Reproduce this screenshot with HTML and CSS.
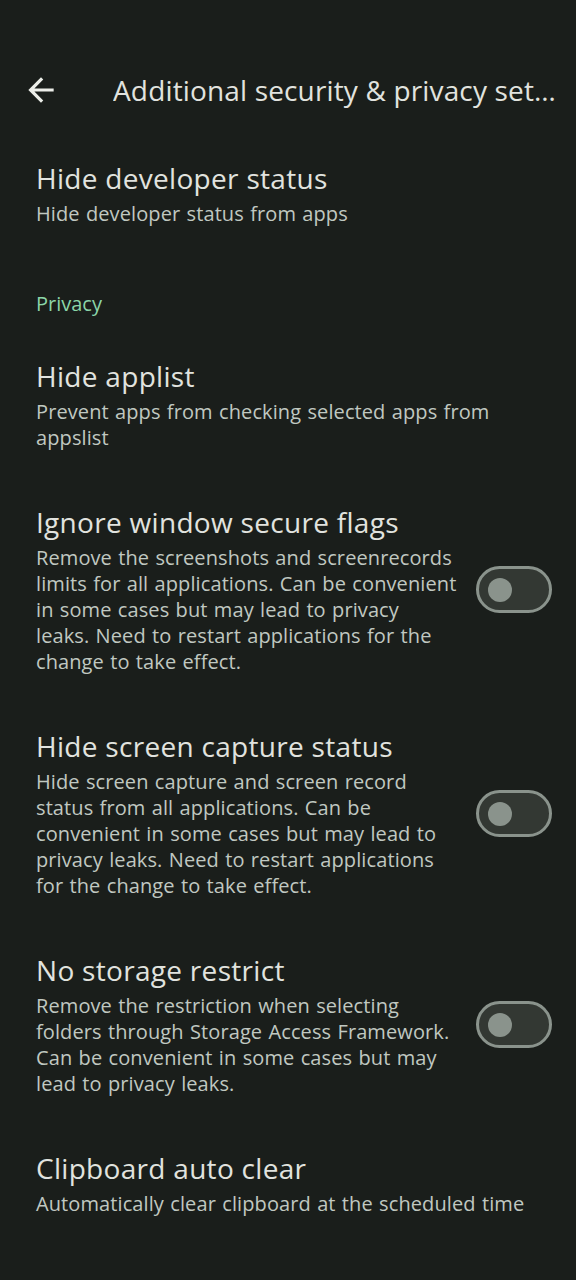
FILE: index.html
```html
<!DOCTYPE html>
<html lang="en">
<head>
  <meta name="viewport" content="width=device-width, initial-scale=1.0">
  <title>Additional security &amp; privacy settings</title>
  <link rel="stylesheet" href="styles.css">
</head>
<body>
  <div class="topbar">
    <button class="back" aria-label="Back">
      <svg viewBox="0 0 24 24" width="38" height="38">
        <path d="M20 11H7.83l5.59-5.59L12 4l-8 8 8 8 1.41-1.41L7.83 13H20v-2z" fill="currentColor"/>
      </svg>
    </button>
    <h1 class="topbar-title">Additional security &amp; privacy settings</h1>
  </div>

  <div class="item">
    <div class="item-text">
      <div class="item-title">Hide developer status</div>
      <div class="item-summary">Hide developer status from apps</div>
    </div>
  </div>

  <div class="category">Privacy</div>

  <div class="item">
    <div class="item-text">
      <div class="item-title">Hide applist</div>
      <div class="item-summary">Prevent apps from checking selected apps from appslist</div>
    </div>
  </div>

  <div class="item">
    <div class="item-text narrow">
      <div class="item-title">Ignore window secure flags</div>
      <div class="item-summary">Remove the screenshots and screenrecords limits for all applications. Can be convenient in some cases but may lead to privacy leaks. Need to restart applications for the change to take effect.</div>
    </div>
    <div class="switch"><div class="thumb"></div></div>
  </div>

  <div class="item">
    <div class="item-text narrow">
      <div class="item-title">Hide screen capture status</div>
      <div class="item-summary">Hide screen capture and screen record status from all applications. Can be convenient in some cases but may lead to privacy leaks. Need to restart applications for the change to take effect.</div>
    </div>
    <div class="switch"><div class="thumb"></div></div>
  </div>

  <div class="item">
    <div class="item-text narrow">
      <div class="item-title">No storage restrict</div>
      <div class="item-summary">Remove the restriction when selecting folders through Storage Access Framework. Can be convenient in some cases but may lead to privacy leaks.</div>
    </div>
    <div class="switch"><div class="thumb"></div></div>
  </div>

  <div class="item">
    <div class="item-text">
      <div class="item-title">Clipboard auto clear</div>
      <div class="item-summary">Automatically clear clipboard at the scheduled time</div>
    </div>
  </div>
</body>
</html>
```

FILE: styles.css
```css
* {
  box-sizing: border-box;
}

body {
  margin: 0;
  background-color: #1a1e1b;
  color: #e1e3df;
  font-family: "Open Sans", Roboto, sans-serif;
  height: 1280px;
  overflow: hidden;
}

.topbar {
  display: flex;
  align-items: center;
  height: 54px;
  margin-top: 63px;
  margin-bottom: 17px;
  padding-left: 22px;
  padding-right: 12px;
}

.back {
  flex: none;
  display: flex;
  align-items: center;
  justify-content: center;
  width: 38px;
  height: 38px;
  padding: 0;
  background: none;
  border: none;
  color: #eceee9;
}

.topbar-title {
  margin: 0 0 0 53px;
  font-size: 28px;
  font-weight: 400;
  letter-spacing: 0.15px;
  white-space: nowrap;
  overflow: hidden;
  text-overflow: ellipsis;
}

.item {
  display: flex;
  align-items: center;
  padding: 26px 24px 27px 36px;
}

.item-text {
  flex: 1;
}

.item-text.narrow {
  padding-right: 19px;
}

.item-title {
  font-size: 28px;
  line-height: 36px;
  margin-bottom: 5px;
  letter-spacing: 0.3px;
  color: #e1e3df;
}

.item-summary {
  font-size: 20px;
  line-height: 26px;
  letter-spacing: 0.1px;
  word-spacing: 1px;
  color: #c0c8c1;
}

.category {
  padding: 37px 36px 15px;
  font-size: 20px;
  line-height: 26px;
  font-weight: 500;
  color: #8bd5a8;
}

.switch {
  flex: none;
  display: flex;
  align-items: center;
  width: 76px;
  height: 47px;
  border: 3px solid #8a938c;
  border-radius: 24px;
  background-color: #333833;
  padding-left: 9px;
}

.thumb {
  width: 24px;
  height: 24px;
  border-radius: 50%;
  background-color: #8a938c;
}
```
